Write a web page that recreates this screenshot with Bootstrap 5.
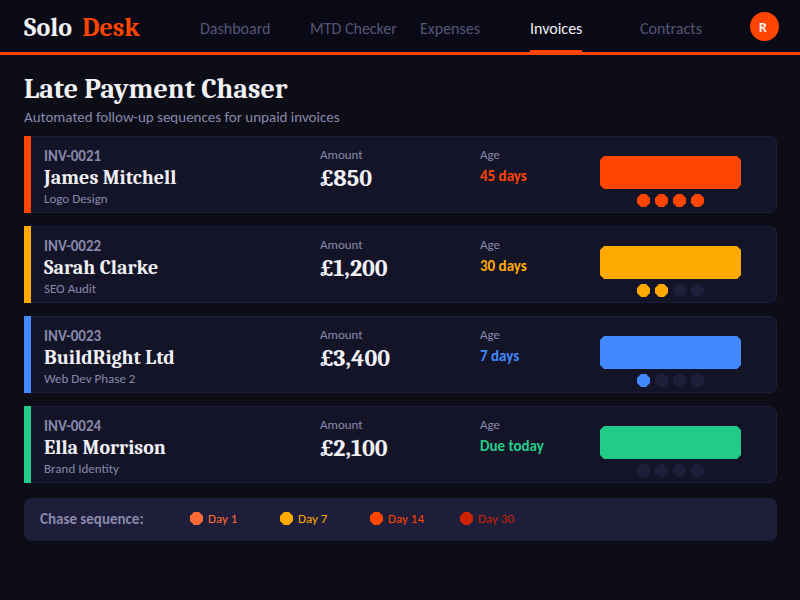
<!DOCTYPE html>
<html lang="en">
<head>
<meta charset="utf-8">
<meta name="viewport" content="width=device-width, initial-scale=1">
<title>Solo Desk – Late Payment Chaser</title>
<link href="https://cdn.jsdelivr.net/npm/bootstrap@5.3.0/dist/css/bootstrap.min.css" rel="stylesheet">
<style>
:root{--ink:#f0f0f5;--muted:#8888aa;--dim:#555577;--line:#1e1e3a;--brand:#ff4500}
body{background:#0d0d18;color:var(--ink);font-family:Carlito,Calibri,Lato,sans-serif;font-size:15px;line-height:20px}
.serif{font-family:Caladea,Cambria,"Liberation Serif",serif;font-weight:700}
.topbar{background:#0a0a16;border-bottom:3px solid var(--brand);min-height:55px}
.brand{width:176px;font-size:26px;line-height:32px;padding-top:4px;gap:10px;color:var(--ink);text-decoration:none}
.brand span{color:var(--brand)}
.tab-cell{width:110px}
.tab-link{display:inline-block;color:var(--dim);font-size:16px;text-decoration:none;padding:19px 0 11px;border-bottom:2px solid transparent;white-space:nowrap}
.tab-link.active{color:var(--ink);border-color:var(--brand)}
.avatar{width:29px;height:29px;border:0;border-radius:50%;background:var(--brand);color:var(--ink);font-size:14px;font-weight:700;margin-right:21px;padding:2px 3px 0 0;line-height:28px}
.page-title{font-size:28px;line-height:32px}
.page-sub{font-size:15px;line-height:20px;color:var(--muted);padding-top:2px;margin-bottom:9px}
.invoice-list{gap:13px}
.edge{width:7px;background:var(--tone)}
.invoice-body{display:grid;grid-template-columns:276fr 160fr 120fr 176fr;background:#141428;border:1px solid var(--line);border-left:0;border-radius:0 8px 8px 0;min-height:77px;padding:9px 0 3px 13px}
.tone-red{--tone:#ff4500}
.tone-amber{--tone:#ffaa00}
.tone-blue{--tone:#4488ff}
.tone-green{--tone:#22cc88}
.tone-coral{--tone:#ff6b35}
.tone-crimson{--tone:#cc2200}
.inv-no{font-weight:700;color:var(--muted)}
.client{font-size:20px;line-height:24px}
.note{font-size:13px;line-height:18px;color:var(--muted)}
.sum{font-size:24px;line-height:28px}
.age{font-weight:700;color:var(--tone);line-height:24px}
.action{padding-top:10px}
.chase{width:141px;height:33px;border:0;background:var(--tone);clip-path:polygon(4px 0,calc(100% - 4px) 0,100% 4px,100% calc(100% - 4px),calc(100% - 4px) 100%,4px 100%,0 calc(100% - 4px),0 4px)}
.pips{width:141px;gap:5px;margin-top:5px}
.pip{width:13px;height:13px;background:var(--line);clip-path:polygon(4px 0,9px 0,13px 4px,13px 9px,9px 13px,4px 13px,0 9px,0 4px)}
.pip.on{background:var(--tone)}
.legend-bar{background:#1e1e3a;border-radius:8px;min-height:43px;padding:0 16px 2px;margin-top:15px}
.legend-title{width:150px;font-weight:700;color:var(--muted)}
.step{width:90px;gap:5px;color:var(--tone);font-size:13px;line-height:16px}
main{padding:18px 23px 24px 24px}
</style>
</head>
<body>
<header class="topbar d-flex align-items-center ps-4">
  <a class="brand serif flex-shrink-0 d-flex" href="#">Solo<span>Desk</span></a>
  <nav class="d-flex align-self-stretch" aria-label="Main">
    <div class="tab-cell"><a class="tab-link" href="#">Dashboard</a></div>
    <div class="tab-cell"><a class="tab-link" href="#">MTD Checker</a></div>
    <div class="tab-cell"><a class="tab-link" href="#">Expenses</a></div>
    <div class="tab-cell"><a class="tab-link active" href="#" aria-current="page">Invoices</a></div>
    <div class="tab-cell"><a class="tab-link" href="#">Contracts</a></div>
  </nav>
  <button class="avatar ms-auto flex-shrink-0" type="button">R</button>
</header>
<main>
  <h1 class="page-title serif mb-0">Late Payment Chaser</h1>
  <p class="page-sub">Automated follow-up sequences for unpaid invoices</p>
  <section class="invoice-list d-grid">
    <article class="d-flex tone-red">
      <div class="edge"></div>
      <div class="invoice-body flex-grow-1">
        <div><div class="inv-no">INV-0021</div><h2 class="client serif mb-0">James Mitchell</h2><div class="note">Logo Design</div></div>
        <div><div class="note">Amount</div><div class="sum serif">£850</div></div>
        <div><div class="note">Age</div><div class="age">45 days</div></div>
        <div class="action"><button class="chase d-block" type="button" aria-label="Chase INV-0021"></button><div class="pips d-flex justify-content-center"><i class="pip on"></i><i class="pip on"></i><i class="pip on"></i><i class="pip on"></i></div></div>
      </div>
    </article>
    <article class="d-flex tone-amber">
      <div class="edge"></div>
      <div class="invoice-body flex-grow-1">
        <div><div class="inv-no">INV-0022</div><h2 class="client serif mb-0">Sarah Clarke</h2><div class="note">SEO Audit</div></div>
        <div><div class="note">Amount</div><div class="sum serif">£1,200</div></div>
        <div><div class="note">Age</div><div class="age">30 days</div></div>
        <div class="action"><button class="chase d-block" type="button" aria-label="Chase INV-0022"></button><div class="pips d-flex justify-content-center"><i class="pip on"></i><i class="pip on"></i><i class="pip"></i><i class="pip"></i></div></div>
      </div>
    </article>
    <article class="d-flex tone-blue">
      <div class="edge"></div>
      <div class="invoice-body flex-grow-1">
        <div><div class="inv-no">INV-0023</div><h2 class="client serif mb-0">BuildRight Ltd</h2><div class="note">Web Dev Phase 2</div></div>
        <div><div class="note">Amount</div><div class="sum serif">£3,400</div></div>
        <div><div class="note">Age</div><div class="age">7 days</div></div>
        <div class="action"><button class="chase d-block" type="button" aria-label="Chase INV-0023"></button><div class="pips d-flex justify-content-center"><i class="pip on"></i><i class="pip"></i><i class="pip"></i><i class="pip"></i></div></div>
      </div>
    </article>
    <article class="d-flex tone-green">
      <div class="edge"></div>
      <div class="invoice-body flex-grow-1">
        <div><div class="inv-no">INV-0024</div><h2 class="client serif mb-0">Ella Morrison</h2><div class="note">Brand Identity</div></div>
        <div><div class="note">Amount</div><div class="sum serif">£2,100</div></div>
        <div><div class="note">Age</div><div class="age">Due today</div></div>
        <div class="action"><button class="chase d-block" type="button" aria-label="Chase INV-0024"></button><div class="pips d-flex justify-content-center"><i class="pip"></i><i class="pip"></i><i class="pip"></i><i class="pip"></i></div></div>
      </div>
    </article>
  </section>
  <section class="legend-bar d-flex align-items-center">
    <div class="legend-title">Chase sequence:</div>
    <div class="step tone-coral d-flex align-items-center"><i class="pip on"></i>Day 1</div>
    <div class="step tone-amber d-flex align-items-center"><i class="pip on"></i>Day 7</div>
    <div class="step tone-red d-flex align-items-center"><i class="pip on"></i>Day 14</div>
    <div class="step tone-crimson d-flex align-items-center"><i class="pip on"></i>Day 30</div>
  </section>
</main>
<script src="https://cdn.jsdelivr.net/npm/bootstrap@5.3.0/dist/js/bootstrap.bundle.min.js"></script>
</body>
</html>
